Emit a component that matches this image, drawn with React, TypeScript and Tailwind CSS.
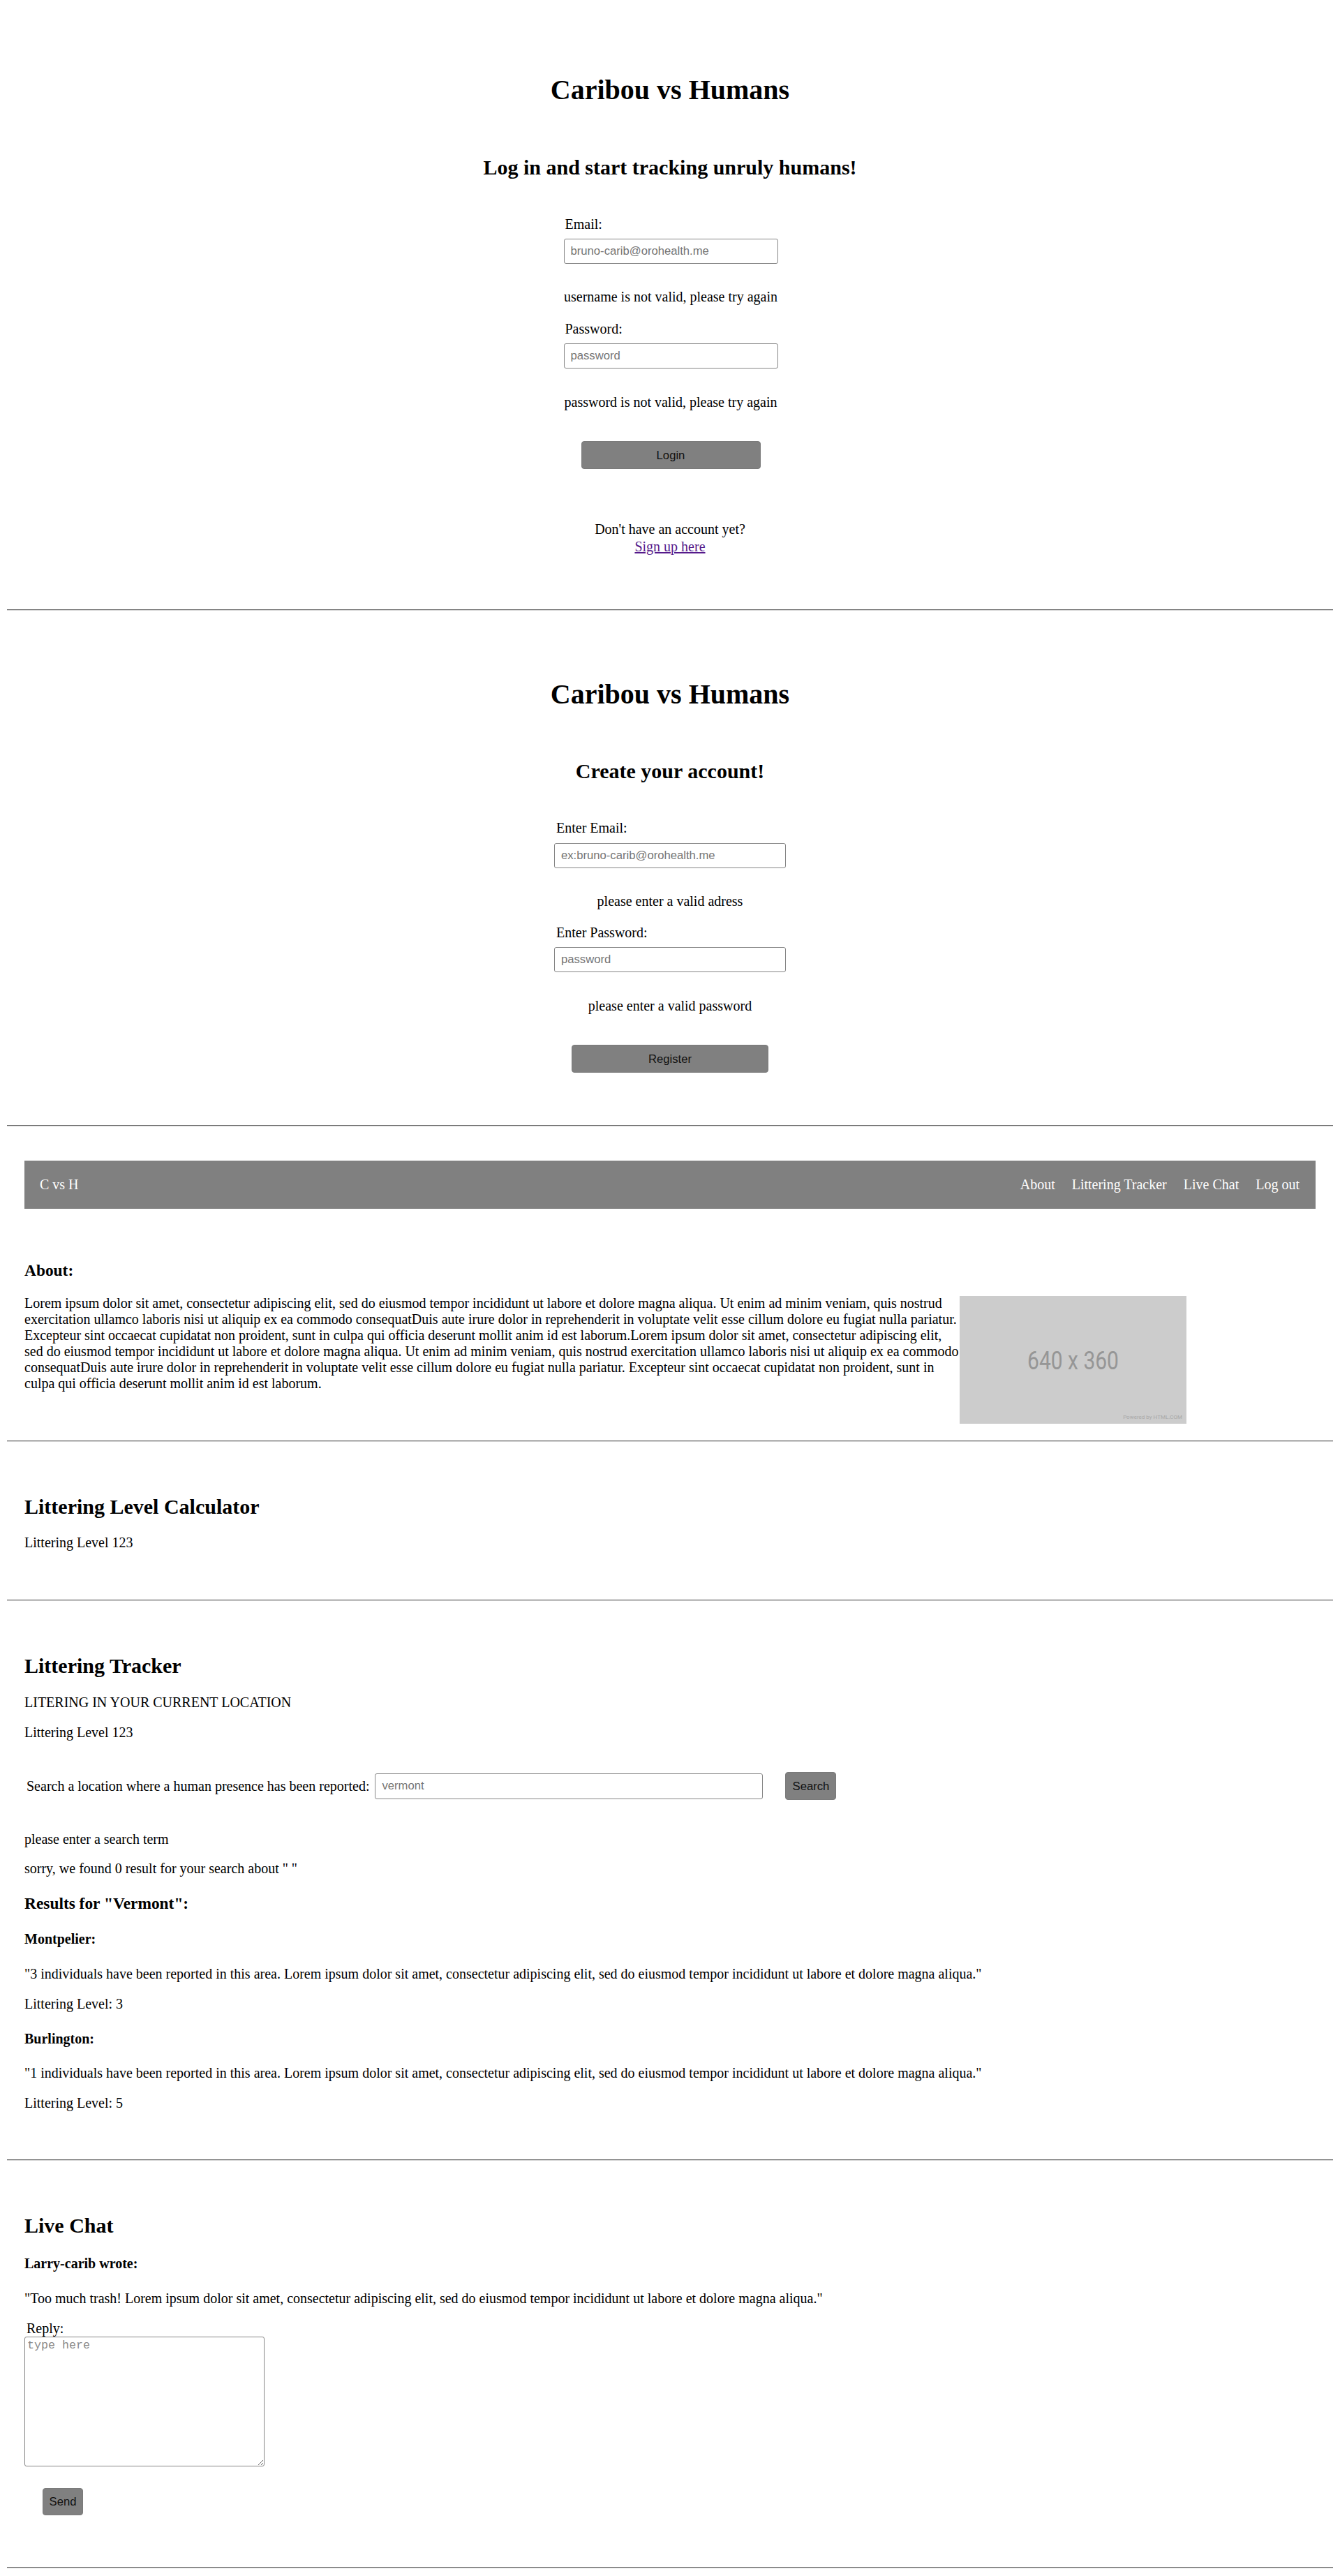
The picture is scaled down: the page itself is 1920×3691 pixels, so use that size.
import React from "react";

const serif = "font-['Liberation_Serif',_'Times_New_Roman',_serif]";
const sans = "font-['Liberation_Sans',_Arial,_sans-serif]";

function Hr({ className = "" }: { className?: string }) {
  return <div className={`h-[2px] w-full border-t border-t-[#6a6a6a] border-b border-b-[#d4d4d4] ${className}`} />;
}

function TextInput({ placeholder, w, className = "" }: { placeholder: string; w: string; className?: string }) {
  return (
    <input
      readOnly
      placeholder={placeholder}
      className={`${w} h-[36px] ${sans} text-[16.67px] leading-[19px] border border-[#858585] rounded-[3px] pl-[9px] pr-[4px] placeholder:text-[#757575] bg-white outline-none ${className}`}
    />
  );
}

function GrayButton({ label, className = "" }: { label: string; className?: string }) {
  return (
    <button
      className={`${sans} text-[16.67px] leading-[19px] text-[#111] bg-[#808080] rounded-[4px] border border-[#7a7a7a] ${className}`}
    >
      {label}
    </button>
  );
}

export default function App() {
  return (
    <div className={`${serif} text-[20px] leading-[23px] text-black bg-white flex flex-col px-[10px] pb-[11px]`}>
      {/* Login */}
      <section className="flex flex-col items-center pt-[106px]">
        <h1 className="text-[40px] leading-[46px] font-bold">Caribou vs Humans</h1>
        <h2 className="mt-[70px] text-[30px] leading-[35px] font-bold">Log in and start tracking unruly humans!</h2>
        <div className="flex flex-col w-[307px] ml-[2px]">
          <label className="mt-[53px] pl-[2px]">Email:</label>
          <TextInput placeholder="bruno-carib@orohealth.me" w="w-[307px]" className="mt-[9px]" />
          <p className="mt-[36px] text-center whitespace-nowrap">username is not valid, please try again</p>
          <label className="mt-[23px] pl-[2px]">Password:</label>
          <TextInput placeholder="password" w="w-[307px]" className="mt-[9px]" />
          <p className="mt-[37px] text-center whitespace-nowrap">password is not valid, please try again</p>
          <GrayButton label="Login" className="mt-[44px] self-center w-[257px] h-[40px]" />
        </div>
        <div className="mt-[75px] flex flex-col items-center">
          <p>Don't have an account yet?</p>
          <a href="#" className="mt-[2px] text-[#551A8B] underline">Sign up here</a>
        </div>
      </section>
      <Hr className="mt-[78px]" />

      {/* Register */}
      <section className="flex flex-col items-center mt-[97px]">
        <h1 className="text-[40px] leading-[46px] font-bold">Caribou vs Humans</h1>
        <h2 className="mt-[69px] text-[30px] leading-[35px] font-bold">Create your account!</h2>
        <div className="flex flex-col w-[332px]">
          <label className="mt-[53px] pl-[3px]">Enter Email:</label>
          <TextInput placeholder="ex:bruno-carib@orohealth.me" w="w-[332px]" className="mt-[10px]" />
          <p className="mt-[36px] text-center">please enter a valid adress</p>
          <label className="mt-[22px] pl-[3px]">Enter Password:</label>
          <TextInput placeholder="password" w="w-[332px]" className="mt-[9px]" />
          <p className="mt-[37px] text-center">please enter a valid password</p>
          <GrayButton label="Register" className="mt-[44px] self-center w-[282px] h-[40px]" />
        </div>
      </section>
      <Hr className="mt-[75px]" />

      {/* Nav */}
      <nav className="mt-[49px] mx-[25px] h-[69px] bg-[#808080] flex items-center justify-between text-white">
        <span className="pl-[22px]">C vs H</span>
        <div className="flex items-center gap-[24px] pr-[23px]">
          <a href="#">About</a>
          <a href="#">Littering Tracker</a>
          <a href="#">Live Chat</a>
          <a href="#">Log out</a>
        </div>
      </nav>

      {/* About */}
      <section className="px-[25px] flex flex-col">
        <h3 className="mt-[75px] text-[23.4px] leading-[27px] font-bold">About:</h3>
        <div className="mt-[22px] flex items-start">
          <p className="w-[1340px]">
            Lorem ipsum dolor sit amet, consectetur adipiscing elit, sed do eiusmod tempor incididunt ut labore et dolore magna aliqua. Ut enim ad minim veniam, quis nostrud exercitation ullamco laboris nisi ut aliquip ex ea commodo consequatDuis aute irure dolor in reprehenderit in voluptate velit esse cillum dolore eu fugiat nulla pariatur. Excepteur sint occaecat cupidatat non proident, sunt in culpa qui officia deserunt mollit anim id est laborum.Lorem ipsum dolor sit amet, consectetur adipiscing elit, sed do eiusmod tempor incididunt ut labore et dolore magna aliqua. Ut enim ad minim veniam, quis nostrud exercitation ullamco laboris nisi ut aliquip ex ea commodo consequatDuis aute irure dolor in reprehenderit in voluptate velit esse cillum dolore eu fugiat nulla pariatur. Excepteur sint occaecat cupidatat non proident, sunt in culpa qui officia deserunt mollit anim id est laborum.
          </p>
          <div className="mt-[1px] w-[325px] h-[183px] shrink-0 bg-[#cccccc] relative flex items-center justify-center">
            <span className="font-['Roboto',_Arial,_sans-serif] text-[30px] leading-[30px] text-[#969696] scale-y-[1.2] mt-[2px]">640 x 360</span>
            <span className="absolute right-[6px] bottom-[4px] font-['Roboto',_Arial,_sans-serif] text-[8px] leading-[10px] text-[#a8a8a8]">Powered by HTML.COM</span>
          </div>
        </div>
      </section>
      <Hr className="mt-[24px]" />

      {/* Calculator */}
      <section className="px-[25px] flex flex-col">
        <h2 className="mt-[75px] text-[30px] leading-[35px] font-bold">Littering Level Calculator</h2>
        <p className="mt-[23px]">Littering Level 123</p>
      </section>
      <Hr className="mt-[70px]" />

      {/* Tracker */}
      <section className="px-[25px] flex flex-col">
        <h2 className="mt-[75px] text-[30px] leading-[35px] font-bold">Littering Tracker</h2>
        <p className="mt-[24px]">LITERING IN YOUR CURRENT LOCATION</p>
        <p className="mt-[20px]">Littering Level 123</p>
        <div className="mt-[45px] h-[40px] flex items-center pl-[3px]">
          <label className="whitespace-nowrap">Search a location where a human presence has been reported:</label>
          <TextInput placeholder="vermont" w="w-[556px]" className="ml-[8px] !h-[37px]" />
          <GrayButton label="Search" className="ml-[32px] w-[73px] h-[40px]" />
        </div>
        <p className="mt-[45px]">please enter a search term</p>
        <p className="mt-[19px]">sorry, we found 0 result for your search about " "</p>
        <h3 className="mt-[25px] text-[23.4px] leading-[27px] font-bold">Results for "Vermont":</h3>
        <h4 className="mt-[26px] font-bold">Montpelier:</h4>
        <p className="mt-[27px]">"3 individuals have been reported in this area. Lorem ipsum dolor sit amet, consectetur adipiscing elit, sed do eiusmod tempor incididunt ut labore et dolore magna aliqua."</p>
        <p className="mt-[20px]">Littering Level: 3</p>
        <h4 className="mt-[27px] font-bold">Burlington:</h4>
        <p className="mt-[26px]">"1 individuals have been reported in this area. Lorem ipsum dolor sit amet, consectetur adipiscing elit, sed do eiusmod tempor incididunt ut labore et dolore magna aliqua."</p>
        <p className="mt-[20px]">Littering Level: 5</p>
      </section>
      <Hr className="mt-[69px]" />

      {/* Live Chat */}
      <section className="px-[25px] flex flex-col items-start">
        <h2 className="mt-[75px] text-[30px] leading-[35px] font-bold">Live Chat</h2>
        <h4 className="mt-[26px] font-bold">Larry-carib wrote:</h4>
        <p className="mt-[27px]">"Too much trash! Lorem ipsum dolor sit amet, consectetur adipiscing elit, sed do eiusmod tempor incididunt ut labore et dolore magna aliqua."</p>
        <label className="mt-[20px] pl-[3px]">Reply:</label>
        <textarea
          readOnly
          placeholder="type here"
          className="w-[344px] h-[186px] border border-[#858585] rounded-[3px] px-[3px] py-[2px] font-['Liberation_Mono',_'DejaVu_Sans_Mono',_monospace] text-[16.67px] leading-[20px] placeholder:text-[#8a8a8a] outline-none resize"
        />
        <GrayButton label="Send" className="mt-[31px] ml-[26px] w-[58px] h-[39px]" />
      </section>
      <Hr className="mt-[74px]" />
    </div>
  );
}
